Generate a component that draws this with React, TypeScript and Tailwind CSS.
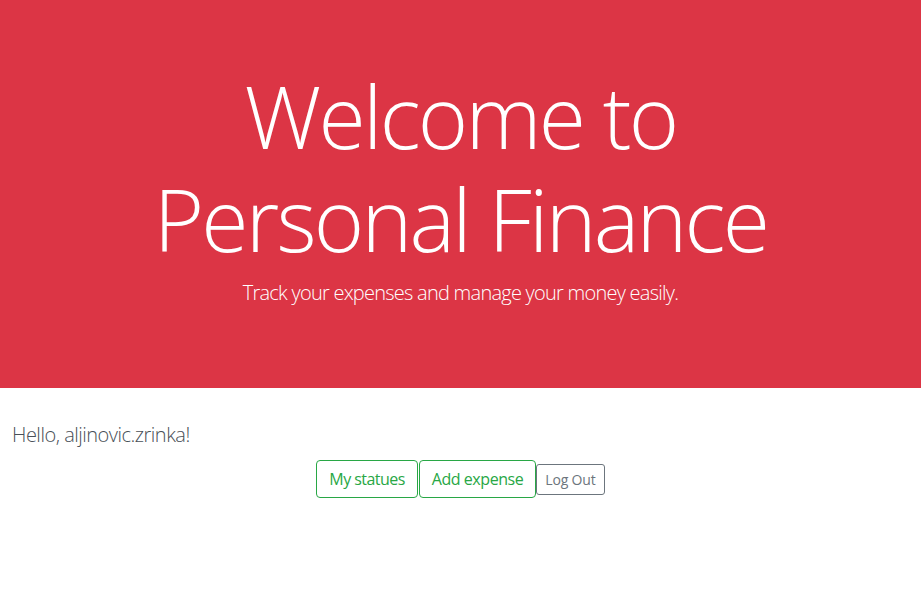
import React from "react";

const App: React.FC = () => {
  return (
    <div
      className="min-h-[598px] bg-white"
      style={{ fontFamily: '"Open Sans", "Noto Sans", sans-serif' }}
    >
      <div className="h-[388px] bg-[#dc3545] px-8 pt-[64px] text-center text-white">
        <h1 className="text-[86px] font-light leading-[1.2] tracking-[-2.75px]">
          <span className="block">Welcome to</span>
          <span className="block">Personal Finance</span>
        </h1>
        <p className="mt-2 text-[20px] font-light leading-[1.5] tracking-[-0.75px]">
          Track your expenses and manage your money easily.
        </p>
      </div>
      <div className="px-3">
        <p className="mt-[32px] text-[20px] font-light leading-[1.5] text-[#495057] tracking-[-0.5px]">
          Hello, aljinovic.zrinka!
        </p>
        <div className="mt-2.5 flex items-center justify-center">
          <button className="rounded border border-[#28a745] px-3 py-1.5 text-base leading-6 tracking-[-0.55px] text-[#28a745]">
            My statues
          </button>
          <button className="ml-px rounded border border-[#28a745] px-3 py-1.5 text-base leading-6 tracking-[-0.45px] text-[#28a745]">
            Add expense
          </button>
          <button className="rounded-[3px] border border-[#6c757d] px-2 py-1 text-sm leading-[21px] tracking-[-0.15px] text-[#6c757d]">
            Log Out
          </button>
        </div>
      </div>
    </div>
  );
};

export default App;
